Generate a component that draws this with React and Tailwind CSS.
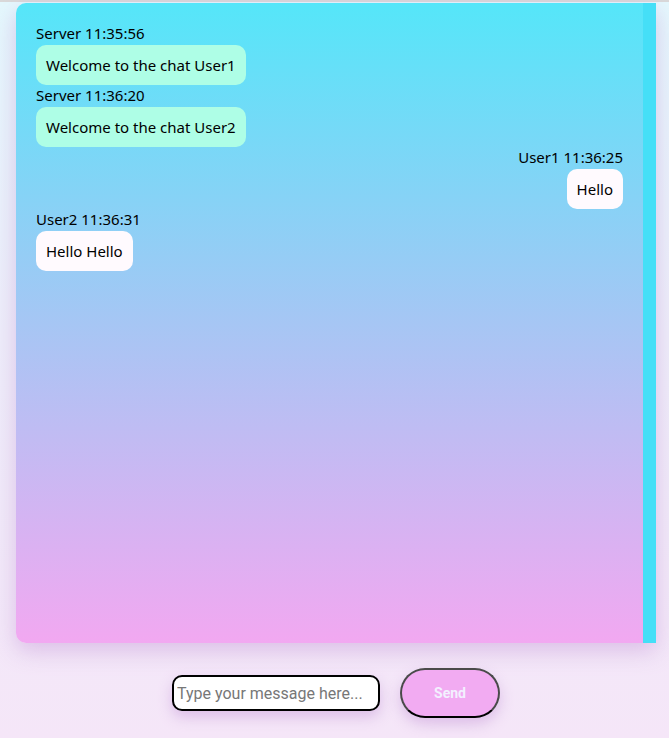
import React from "react";

const messages = [
  { who: "Server 11:35:56", text: "Welcome to the chat User1", kind: "server" },
  { who: "Server 11:36:20", text: "Welcome to the chat User2", kind: "server" },
  { who: "User1 11:36:25", text: "Hello", kind: "me" },
  { who: "User2 11:36:31", text: "Hello Hello", kind: "other" },
];

export default function App() {
  return (
    <div className="min-h-[738px] w-[669px] border-t-2 border-[#d9d9d9] bg-[linear-gradient(180deg,#e4f8fd_0%,#eeeefa_45%,#f5e6f8_100%)]">
      <div className="ml-4 mt-px w-[640px]">
        <div className="flex h-[640px] overflow-hidden rounded-l-[10px] shadow-[0_8px_22px_rgba(190,140,210,0.45)]">
          <div
            className="flex flex-1 flex-col gap-0 bg-[linear-gradient(180deg,#55e6f9_0%,#a6c6f4_50%,#f2a8f1_100%)] px-5 pt-[20px] text-[15px] text-black"
            style={{ fontFamily: '"Noto Sans", "Open Sans", sans-serif' }}
          >
            {messages.map((m, i) => (
              <div
                key={i}
                className={`flex flex-col ${m.kind === "me" ? "items-end" : "items-start"}`}
              >
                <div className="h-[22px] leading-[20px]">{m.who}</div>
                <div
                  className={`h-[40px] rounded-[10px] px-[10px] leading-[40px] ${
                    m.kind === "server" ? "bg-[#aefee6]" : "bg-[#fffafe]"
                  }`}
                >
                  {m.text}
                </div>
              </div>
            ))}
          </div>
          <div className="w-[13px] bg-[#45dff7]" />
        </div>
        <div
          className="mt-[25px] flex items-center justify-center gap-5"
          style={{ fontFamily: "Roboto, Arial, sans-serif" }}
        >
          <input
            placeholder="Type your message here..."
            className="h-[36px] w-[208px] rounded-[10px] border-2 border-black bg-white px-[3px] text-[16px] text-black shadow-[0_6px_14px_rgba(190,140,210,0.45)] outline-none placeholder:text-[#777]"
          />
          <button className="h-[50px] w-[100px] rounded-[25px] border-2 border-[#4a4a4a] border-b-black bg-[#f2abf2] text-[14px] font-bold text-[#f3f0ff] shadow-[0_6px_14px_rgba(190,140,210,0.45)]">
            Send
          </button>
        </div>
      </div>
    </div>
  );
}
